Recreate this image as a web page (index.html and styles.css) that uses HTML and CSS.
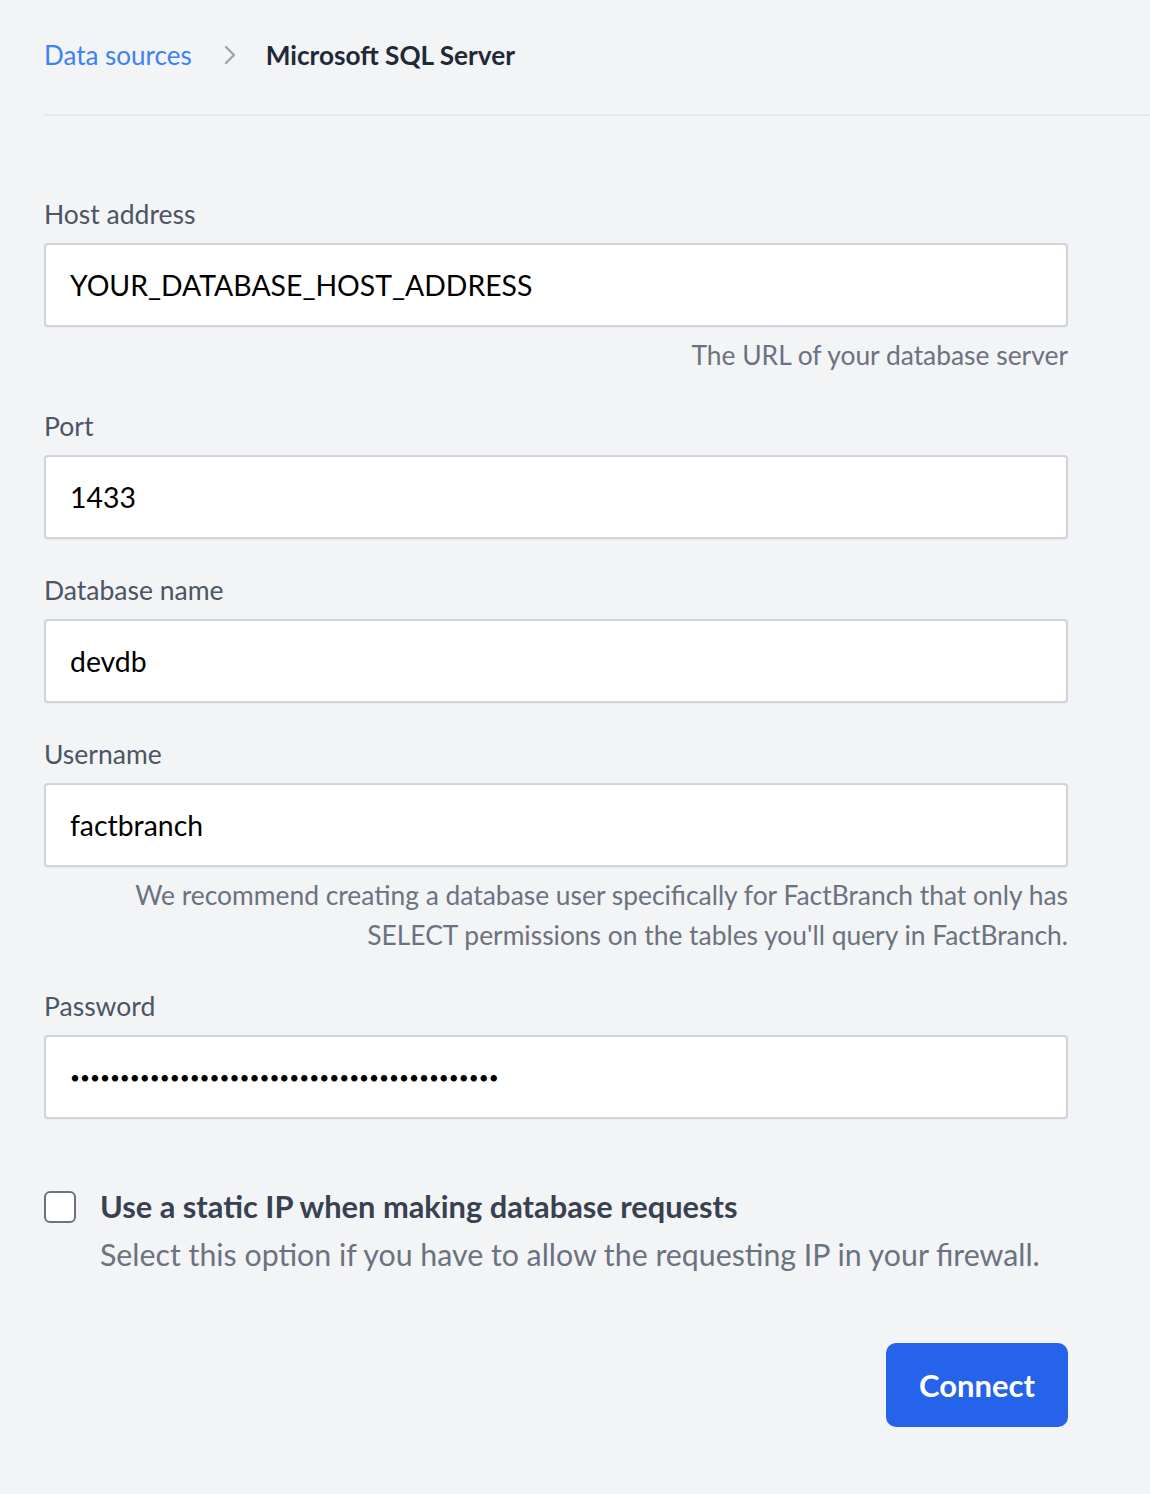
FILE: index.html
```html
<!DOCTYPE html>
<html lang="en">
<head>
    <meta charset="UTF-8">
    <meta name="viewport" content="width=device-width, initial-scale=1.0">
    <title>Microsoft SQL Server</title>
    <link rel="stylesheet" href="styles.css">
</head>
<body>

    <header class="crumbs">
        <a href="#" class="crumb-link">Data sources</a>
        <svg class="crumb-sep" width="16" height="22" viewBox="0 0 16 22">
            <path d="M4 3 L12 11 L4 19" fill="none" stroke="#9ca3af" stroke-width="2.4" stroke-linecap="round" stroke-linejoin="round"/>
        </svg>
        <span class="crumb-current">Microsoft SQL Server</span>
    </header>

    <form class="form">
        <div class="field">
            <label class="label" for="host">Host address</label>
            <input class="input" id="host" type="text" value="YOUR_DATABASE_HOST_ADDRESS">
            <p class="help">The URL of your database server</p>
        </div>

        <div class="field">
            <label class="label" for="port">Port</label>
            <input class="input" id="port" type="text" value="1433">
        </div>

        <div class="field">
            <label class="label" for="dbname">Database name</label>
            <input class="input" id="dbname" type="text" value="devdb">
        </div>

        <div class="field">
            <label class="label" for="user">Username</label>
            <input class="input" id="user" type="text" value="factbranch">
            <p class="help">We recommend creating a database user specifically for FactBranch that only has<br>SELECT permissions on the tables you'll query in FactBranch.</p>
        </div>

        <div class="field">
            <label class="label" for="pass">Password</label>
            <input class="input input-pass" id="pass" type="password" value="abcdefghijabcdefghijabcdefghijabcdefghijabc">
        </div>

        <div class="check-row">
            <input class="checkbox" id="staticip" type="checkbox">
            <div>
                <label class="check-title" for="staticip">Use a static IP when making database requests</label>
                <p class="check-desc">Select this option if you have to allow the requesting IP in your firewall.</p>
            </div>
        </div>

        <div class="actions">
            <button type="button" class="btn">Connect</button>
        </div>
    </form>

</body>
</html>
```

FILE: styles.css
```css
body {
    margin: 0;
    background-color: #f3f4f6;
    font-family: 'Lato', 'Open Sans', sans-serif;
    color: #111827;
}
.crumbs {
    display: flex;
    align-items: center;
    margin-left: 44px;
    height: 116px;
    border-bottom: 2px solid #e5e7eb;
    box-sizing: border-box;
    padding-bottom: 4px;
}
.crumb-link {
    color: #3b82f6;
    text-decoration: none;
    font-size: 26px;
}
.crumb-sep {
    margin: 0 28px 0 30px;
}
.crumb-current {
    font-size: 26.2px;
    font-weight: bold;
    color: #1f2937;
}
.form {
    width: 1024px;
    margin: 0 0 0 44px;
    padding-top: 82px;
}
.field {
    margin-bottom: 35px;
}
.label {
    display: block;
    font-size: 26.5px;
    color: #4b5563;
    margin-bottom: 13px;
}
.input {
    display: block;
    width: 100%;
    height: 84px;
    box-sizing: border-box;
    border: 2px solid #d1d5db;
    border-radius: 4px;
    background: #fff;
    box-shadow: 0 1px 2px rgba(0, 0, 0, 0.05);
    padding: 0 24px;
    font-family: inherit;
    font-size: 28.4px;
    color: #000;
}
.input-pass {
    font-size: 17.2px;
    letter-spacing: 0;
}
.help {
    margin: 8px 0 0;
    text-align: right;
    font-size: 26.4px;
    line-height: 40px;
    color: #6b7280;
}
.check-row {
    display: flex;
    align-items: flex-start;
    margin-top: 70px;
}
.checkbox {
    appearance: none;
    width: 32px;
    height: 32px;
    margin: 2px 24px 0 0;
    border: 2px solid #6b7280;
    border-radius: 6px;
    background: #fff;
    flex-shrink: 0;
}
.check-title {
    display: block;
    font-size: 30.8px;
    font-weight: bold;
    color: #374151;
    line-height: 36px;
}
.check-desc {
    margin: 11px 0 0;
    font-size: 30.3px;
    color: #6b7280;
}
.actions {
    display: flex;
    justify-content: flex-end;
    margin-top: 71px;
}
.btn {
    width: 182px;
    height: 84px;
    background-color: #2563eb;
    color: white;
    border: none;
    border-radius: 10px;
    font-family: inherit;
    font-size: 31px;
    font-weight: bold;
    cursor: pointer;
}
```
